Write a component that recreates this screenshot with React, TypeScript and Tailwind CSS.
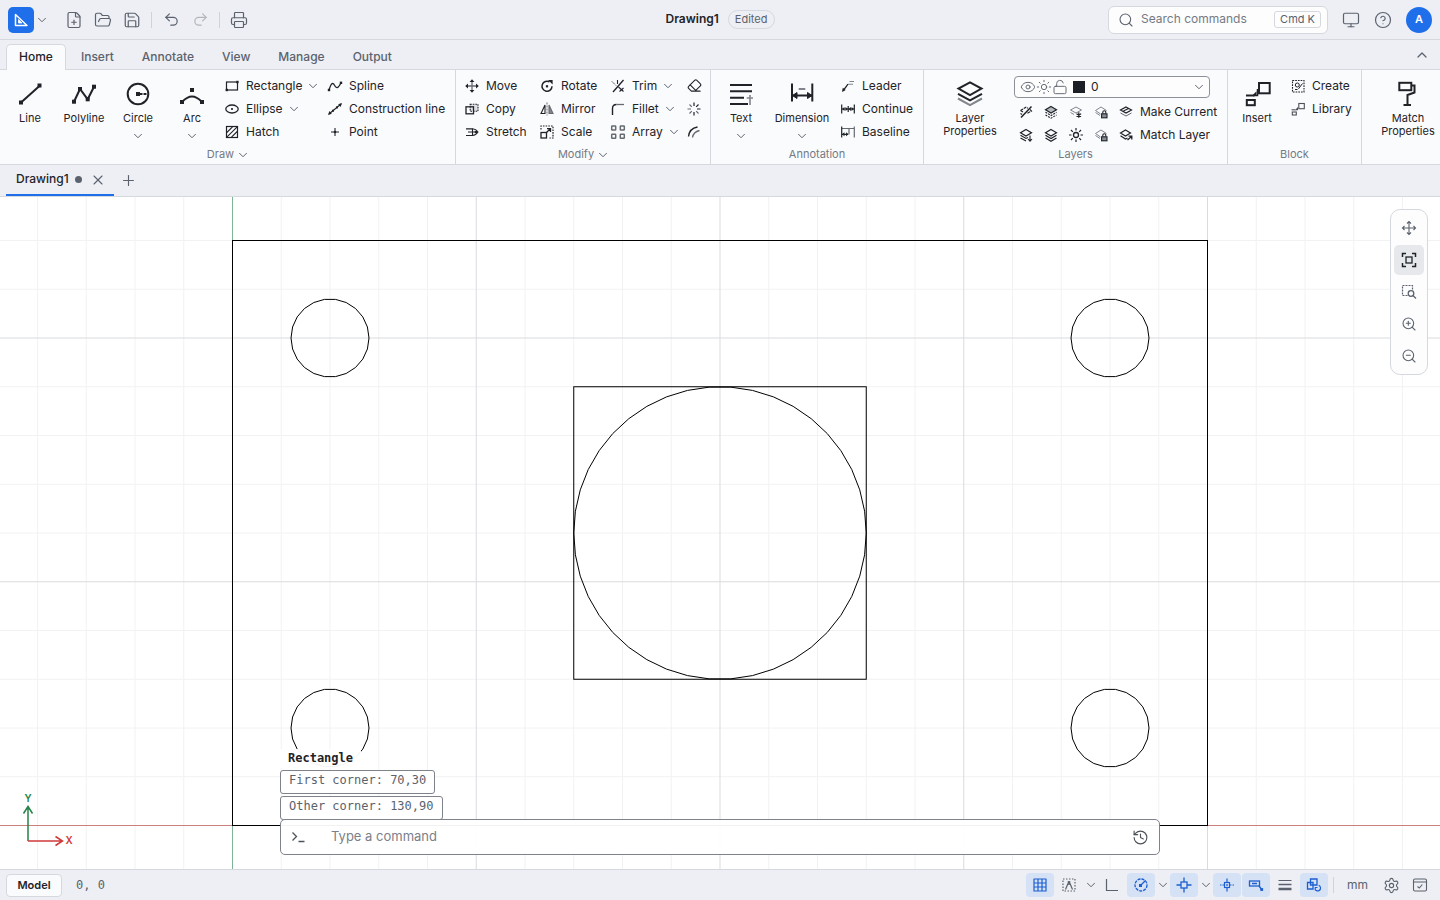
import { useState } from "react";
import type { ReactNode } from "react";
import {
  ChevronDown,
  ChevronUp,
  CircleHelp,
  Eraser,
  Eye,
  FilePlus,
  FolderOpen,
  History,
  LockOpen,
  Monitor,
  Plus,
  Printer,
  Redo2,
  Save,
  Search,
  Settings,
  Sun,
  Undo2,
  X,
  ZoomIn,
  ZoomOut,
} from "lucide-react";

interface GlyphProps {
  box?: number;
  className?: string;
  children: ReactNode;
}

// Line drawing base, 16 units for small tools and 28 for the large ones
const Glyph = ({ box = 16, className = "", children }: GlyphProps) => (
  <svg
    width={box}
    height={box}
    viewBox={`0 0 ${box} ${box}`}
    fill="none"
    stroke="currentColor"
    strokeWidth={box === 28 ? 2 : 1.3}
    className={`shrink-0 ${className}`}
    aria-hidden="true"
  >
    {children}
  </svg>
);

const Dot = ({ x, y, s = 2.4 }: { x: number; y: number; s?: number }) => (
  <rect x={x - s / 2} y={y - s / 2} width={s} height={s} fill="currentColor" stroke="none" />
);

const DIAMOND = "M8 2.5 13.5 5.7 8 9 2.5 5.7Z";
const LOCK = (
  <>
    <rect x="8.6" y="9.8" width="5.4" height="4" fill="#888d95" strokeWidth="1.1" />
    <path d="M9.8 9.5V8.2a1.5 1.5 0 0 1 3 0v1.3" strokeWidth="1.1" />
  </>
);

const icons = {
  line: (
    <Glyph box={28}>
      <path d="M5 22.5 24 5.5" />
      <Dot x={5} y={22.5} s={4} />
      <Dot x={23.5} y={5.5} s={4} />
    </Glyph>
  ),
  polyline: (
    <Glyph box={28}>
      <path d="M4 21.7 10 9l7.7 10.3L24 6.7" />
      <Dot x={4} y={21.7} s={4} />
      <Dot x={10} y={9} s={4} />
      <Dot x={17.7} y={19.3} s={4} />
      <Dot x={24} y={6.7} s={4} />
    </Glyph>
  ),
  circle: (
    <Glyph box={28}>
      <circle cx="14" cy="14" r="10.3" />
      <Dot x={14} y={14} s={4} />
      <path d="M16 14h2.5M19.5 14h3" strokeWidth="1.8" />
    </Glyph>
  ),
  arc: (
    <Glyph box={28}>
      <path d="M4 22C8 18 11 16.6 14 16.6S20 18 24 22" />
      <Dot x={4} y={22} s={4} />
      <Dot x={24} y={22} s={4} />
      <Dot x={14} y={10} s={4} />
    </Glyph>
  ),
  text: (
    <Glyph box={28}>
      <path d="M3 5h22M3 11.3h22M3 17.7h14M3 24h18" />
      <path d="M23 15v10M19.7 18H26" stroke="#81868d" strokeWidth="1.6" />
    </Glyph>
  ),
  dimension: (
    <Glyph box={28}>
      <path d="M4 3.5v18M24.3 3.5v18M4 15.5h20" />
      <path d="m4.5 15.5 4.5-3v6ZM24 15.5l-4.500-3v6Z" fill="currentColor" strokeWidth="1" />
      <path d="M10.7 9h6.600" stroke="#81868d" />
    </Glyph>
  ),
  layerProps: (
    <Glyph box={28}>
      <path d="m2 18.5 12 6.600 12-6.600" stroke="#81868d" />
      <path d="M14 2.3 25.500 8.600 14 15 2.500 8.600ZM2 13.800l12 6.600 12-6.600" />
    </Glyph>
  ),
  insert: (
    <Glyph box={28}>
      <rect x="16" y="3" width="10.7" height="10.3" />
      <rect x="3.8" y="20" width="8" height="5.2" />
      <path d="M3 15.5h8.500" />
      <path d="m9 15.800 4.500-4.500v4.500Z" fill="currentColor" stroke="none" />
      <path d="M10 15.500h4.500V9" strokeWidth="1.500" />
    </Glyph>
  ),
  matchProps: (
    <Glyph box={28}>
      <rect x="5.3" y="2.8" width="12" height="7.4" />
      <path d="M17.5 5.5h3v7L13.5 15v9.5M9.5 25h7.5" />
    </Glyph>
  ),
  rectangle: (
    <Glyph>
      <rect x="2.5" y="4" width="11" height="8" strokeWidth="1.2" />
      <Dot x={2.8} y={12} />
      <Dot x={13.4} y={4} />
    </Glyph>
  ),
  ellipse: (
    <Glyph>
      <ellipse cx="8" cy="8" rx="6.2" ry="4" />
      <Dot x={8} y={8} s={1.8} />
    </Glyph>
  ),
  hatch: (
    <Glyph>
      <rect x="2.5" y="2.5" width="11" height="11" strokeWidth="1.2" />
      <path d="M2.8 8.5 8.5 2.8M2.8 13.2 13.2 2.8M7.5 13.2l5.7-5.7" strokeWidth="1.1" />
    </Glyph>
  ),
  spline: (
    <Glyph>
      <path d="M2 12C4.5 4 6 4.5 7.600 7.500S11 11 14 4.800" />
      <Dot x={2} y={12} />
      <Dot x={14} y={4.8} />
    </Glyph>
  ),
  constructionLine: (
    <Glyph>
      <path d="m2 13 12-10" strokeWidth="1.1" />
      <path d="m1 14 1.4-4 2.4 2.8ZM15 2l-1.4 4-2.4-2.8Z" fill="currentColor" stroke="none" />
      <Dot x={6} y={9.7} s={2} />
      <Dot x={10} y={6.4} s={2} />
    </Glyph>
  ),
  point: (
    <Glyph>
      <path d="M8 4v8M4 8h8" strokeWidth="1.1" />
      <Dot x={8} y={8} s={2.2} />
    </Glyph>
  ),
  move: (
    <Glyph>
      <path d="M8 3v10M3 8h10" stroke="#666b72" />
      <path d="M8 1.2 10.4 4H5.6ZM8 14.8 5.6 12h4.8ZM1.2 8 4 5.6v4.8ZM14.8 8 12 10.4V5.6Z" fill="currentColor" stroke="none" />
    </Glyph>
  ),
  copy: (
    <Glyph>
      <rect x="6.2" y="3.2" width="7.8" height="7" fill="#dfe1e5" strokeDasharray="1.6 1" strokeWidth="1.1" />
      <rect x="2" y="5.8" width="7.5" height="7" />
    </Glyph>
  ),
  stretch: (
    <Glyph>
      <path d="M2 4.8h6.500M2 11.500h6.500M4 8h8" strokeWidth="1.2" />
      <path d="M8.500 4.800C11 5 13 6.500 14 8c-1 1.500-3 3.300-5.500 3.500Z" strokeWidth="1.1" />
      <Dot x={12} y={8} />
    </Glyph>
  ),
  rotate: (
    <Glyph>
      <path d="M10.500 3.900A5 5 0 1 0 13 8.300" strokeWidth="1.5" />
      <path d="M9 2h4.600v4.600Z" fill="currentColor" stroke="none" />
      <Dot x={8} y={8.3} s={2.2} />
    </Glyph>
  ),
  mirror: (
    <Glyph>
      <path d="M6 4v8.5H2Z" strokeWidth="1.1" />
      <path d="M8 1.5v13" stroke="#666b72" strokeDasharray="2 1" strokeWidth="1" />
      <path d="M10 4v8.5h4Z" fill="#81868d" stroke="#666b72" strokeWidth="1.1" />
    </Glyph>
  ),
  scale: (
    <Glyph>
      <rect x="2" y="8.5" width="5.5" height="5.5" />
      <path d="M2 5.5V2h12v12h-3.5" strokeDasharray="1.6 1.1" strokeWidth="1.2" />
      <path d="m7.5 8.5 3.5-3.5M8 4.600h3.500v3.500" />
    </Glyph>
  ),
  trim: (
    <Glyph>
      <path d="M13.5 2 3 14" />
      <path d="M2 3.5 6 7.5" strokeDasharray="1.5 1" strokeWidth="1" />
      <path d="M7.500 2v4M8.500 9l5 4.500M13.500 10l-4 3.500" strokeWidth="1.1" />
    </Glyph>
  ),
  fillet: (
    <Glyph>
      <path d="M2.5 14V7.500c0-2.500 1.500-4 4-4" strokeWidth="1.4" />
      <path d="M6.500 3.500H14" stroke="#666b72" />
    </Glyph>
  ),
  array: (
    <Glyph className="text-[#666b72]">
      <rect x="1.7" y="2" width="4" height="4" rx="0.5" strokeWidth="1.500" />
      <rect x="10.3" y="2" width="4" height="4" rx="0.5" strokeWidth="1.500" />
      <rect x="1.7" y="10.3" width="4" height="4" rx="0.5" strokeWidth="1.500" />
      <rect x="10.3" y="10.3" width="4" height="4" rx="0.5" strokeWidth="1.500" />
    </Glyph>
  ),
  explode: (
    <Glyph>
      <path d="M8 1.5V5M8 11v3.5M11 8h3.5M10.2 5.8l2.3-2.3" strokeWidth="1.2" />
      <path d="M1.5 8H5M3.5 3.5l2.3 2.3M3.5 12.5l2.3-2.3M10.2 10.2l2.3 2.3" stroke="#666b72" strokeWidth="1.2" />
    </Glyph>
  ),
  offset: (
    <Glyph>
      <path d="M2.5 12.5C3 7.5 6 4 11.5 3" />
      <path d="M6.5 13.5c.5-3.5 2.8-6 7-7" stroke="#666b72" />
    </Glyph>
  ),
  leader: (
    <Glyph>
      <path d="M3 12.8 8 6.2" />
      <path d="M8 6.2h5M9.5 3.5H14" stroke="#81868d" strokeWidth="1.1" />
      <path d="m2 14 .8-4.2 2.9 2.2Z" fill="currentColor" stroke="none" />
    </Glyph>
  ),
  continue: (
    <Glyph>
      <path d="M1.7 3.5v9M8.2 5v6M14.3 3.5v9M2 8h12" strokeWidth="1.2" />
      <path d="m2 8 2.5-2v4ZM8 8 5.5 6v4ZM8.4 8l2.5-2v4ZM14 8l-2.5-2v4Z" fill="currentColor" stroke="none" />
    </Glyph>
  ),
  baseline: (
    <Glyph>
      <path d="M14.3 2.5v11M2 4.5h12M9 4.5v6" stroke="#666b72" strokeWidth="1.2" />
      <path d="M1.7 2.5v11M2 10.3h6" strokeWidth="1.2" />
      <path d="m2 10.3 2.5-2v4ZM8.5 10.3l-2.5-2v4Z" fill="currentColor" stroke="none" />
    </Glyph>
  ),
  layerOff: (
    <Glyph>
      <path d="M13.5 2.5 3 13.5" strokeWidth="1.5" />
      <path d="M2.5 6.5 8 3.2l2 1M2.5 6.5 5 8M12 5.500 13.500 7 9 9.500" strokeDasharray="3 0.8" strokeWidth="1.1" />
      <path d="M2.5 9.500 4 10.500" strokeWidth="1.1" />
    </Glyph>
  ),
  layerIsolate: (
    <Glyph>
      <path d={DIAMOND} fill="#b5b9be" strokeWidth="1.2" />
      <path d="M2.5 8.3 8 11.5l5.500-3.200M2.500 11 8 14.200l5.500-3.200" strokeDasharray="2 1" strokeWidth="1.1" />
    </Glyph>
  ),
  layerFreeze: (
    <Glyph>
      <path d="M8 3 13.5 6 8 9 2.500 6ZM2.500 8.500 6 10.500" stroke="#81868d" strokeWidth="1" />
      <path d="M10.800 8.300v5.400M8.500 9.700l4.600 2.700M13.100 9.700l-4.600 2.700" strokeWidth="1.2" />
    </Glyph>
  ),
  layerLock: (
    <Glyph>
      <path d="M7.500 10 2.500 6.500 8 3l5.500 3.500M2.500 8.500 7 11.500" stroke="#81868d" strokeWidth="1" />
      {LOCK}
    </Glyph>
  ),
  layerCurrent: (
    <Glyph>
      <path d="M8 3 13.500 6 8 9 2.500 6ZM5.500 7l5-2.500" strokeWidth="1.2" />
      <path d="M2.500 9 8 12l5.500-3" strokeWidth="1" stroke="#666b72" />
    </Glyph>
  ),
  layerWalk: (
    <Glyph>
      <path d={DIAMOND} strokeWidth="1.2" />
      <path d="M2.500 8.300 8 11.500l2-1M2.500 11 8 14" strokeWidth="1.1" />
      <path d="M12 8.500V14M10 12l2 2.200 2-2.200" strokeWidth="1.1" />
    </Glyph>
  ),
  layerAll: (
    <Glyph>
      <path d={DIAMOND} strokeWidth="1.2" />
      <path d="M2.500 8.300 8 11.500l5.500-3.200M2.500 11 8 14.200l5.500-3.200" strokeWidth="1.2" />
    </Glyph>
  ),
  layerThaw: (
    <Glyph>
      <circle cx="8" cy="8" r="2.5" />
      <path d="M8 1v2.5M8 12.5V15M1 8h2.5M12.5 8H15M3 3l1.8 1.8M11.2 11.2 13 13M3 13l1.8-1.8M11.2 4.8 13 3" strokeWidth="1.2" />
    </Glyph>
  ),
  layerMatch: (
    <Glyph>
      <path d="M7.500 3 12.500 6 7.500 9 2.500 6ZM2.500 8.800 7.500 12l2-1" strokeWidth="1.2" />
      <path d="m9.500 13 4-3.500M10.500 9.200h3.300v3.300" strokeWidth="1.3" />
    </Glyph>
  ),
  blockCreate: (
    <Glyph>
      <rect x="2.5" y="2.5" width="11.5" height="11.5" strokeDasharray="1.7 1" strokeWidth="1.1" />
      <circle cx="7.3" cy="7" r="2" strokeWidth="1" />
      <path d="m8.500 10.800 4-5.300M5 11.500h2.500" strokeWidth="1" />
    </Glyph>
  ),
  blockLibrary: (
    <Glyph className="text-[#4d5259]">
      <rect x="8.8" y="2.5" width="5.5" height="5.2" strokeWidth="1.1" />
      <rect x="2.3" y="11" width="4" height="3" strokeWidth="1.1" />
      <path d="M1.500 8.800h4" strokeWidth="1.1" />
      <path d="M5 9.300 8 5.800v3.500Z" fill="currentColor" stroke="none" />
    </Glyph>
  ),
};

const ICON_BUTTON = "flex items-center justify-center rounded-[5px] text-[#5b626d]";

const Caret = () => <ChevronDown size={14} strokeWidth={1.7} className="-m-0.5 shrink-0 text-[#5b626d]" />;

interface ToolProps {
  icon: ReactNode;
  label: string;
  caret?: boolean;
}

const Tool = ({ icon, label, caret }: ToolProps) => (
  <button className="flex h-[23px] items-center gap-1.5 whitespace-nowrap text-left">
    {icon}
    <span>{label}</span>
    {caret && <Caret />}
  </button>
);

const BigTool = ({ icon, label, caret, className = "w-[54px]" }: ToolProps & { className?: string }) => (
  <button className={`flex shrink-0 flex-col items-center self-start pt-1.5 text-[11px] leading-[13px] ${className}`}>
    {icon}
    <span className="mt-1">{label}</span>
    {caret && (
      <span className="mt-1.5">
        <Caret />
      </span>
    )}
  </button>
);

interface PanelProps {
  title: string;
  caret?: boolean;
  className: string;
  inset: string;
  children: ReactNode;
}

const Panel = ({ title, caret, className, inset, children }: PanelProps) => (
  <section className={`flex shrink-0 flex-col border-r border-[#d5d8de] ${className}`}>
    <div className={`flex flex-1 items-start pt-1 ${inset}`}>{children}</div>
    <h2 className="flex h-[18px] items-center justify-center gap-1 pb-px text-[11px] text-[#747a84]">
      {title}
      {caret && <Caret />}
    </h2>
  </section>
);

const Separator = () => <span className="mx-1 h-4 w-px bg-[#d0d4da]" />;

const TitleBar = () => (
  <header className="grid h-10 shrink-0 grid-cols-[1fr_auto_1fr] items-center border-b border-[#d5d8de] px-2">
    <div className="flex items-center">
      <button aria-label="Application menu" className="flex items-center gap-[3px]">
        <span className="flex size-[26px] items-center justify-center rounded-[5px] bg-[#1f6feb] text-white">
          <Glyph>
            <path d="M2.5 2.5v11H14Z" strokeWidth="1.5" strokeLinejoin="round" />
            <path d="M5.500 7.500V11H9Z" fill="currentColor" strokeWidth="0.8" />
          </Glyph>
        </span>
        <Caret />
      </button>
      <div className="ml-[13px] flex items-center gap-px">
        <button aria-label="New" className={`${ICON_BUTTON} size-7`}><FilePlus size={18} strokeWidth={1.6} /></button>
        <button aria-label="Open" className={`${ICON_BUTTON} size-7`}><FolderOpen size={18} strokeWidth={1.6} /></button>
        <button aria-label="Save" className={`${ICON_BUTTON} size-7`}><Save size={18} strokeWidth={1.6} /></button>
        <Separator />
        <button aria-label="Undo" className={`${ICON_BUTTON} size-7`}><Undo2 size={17} strokeWidth={1.7} /></button>
        <button aria-label="Redo" disabled className={`${ICON_BUTTON} size-7 opacity-40`}><Redo2 size={17} strokeWidth={1.7} /></button>
        <Separator />
        <button aria-label="Print" className={`${ICON_BUTTON} size-7`}><Printer size={18} strokeWidth={1.6} /></button>
      </div>
    </div>
    <div className="flex items-center gap-[9px]">
      <h1 className="pb-px text-xs font-semibold">Drawing1</h1>
      <span className="flex h-[19px] items-center rounded-full border border-[#d5d8de] px-1.5 text-[11px] text-[#5b626d]">Edited</span>
    </div>
    <div className="flex items-center justify-end gap-[9px]">
      <label className="flex h-7 w-[220px] items-center rounded-md border border-[#d5d8de] bg-[#fdfdfe] pl-[9px] pr-1.5">
        <Search size={16} strokeWidth={1.6} className="shrink-0 text-[#5b626d]" />
        <input
          aria-label="Search commands"
          placeholder="Search commands"
          className="ml-[7px] w-full min-w-0 bg-transparent pb-0.5 text-xs outline-none placeholder:text-[#747a84]"
        />
        <kbd className="flex h-[17px] shrink-0 items-center whitespace-nowrap rounded-[3px] border border-[#d5d8de] px-[5px] font-[Inter,sans-serif] text-[11px] text-[#5b626d]">Cmd K</kbd>
      </label>
      <div className="flex gap-1">
        <button aria-label="Display" className={`${ICON_BUTTON} size-7`}><Monitor size={18} strokeWidth={1.6} /></button>
        <button aria-label="Help" className={`${ICON_BUTTON} size-7`}><CircleHelp size={18} strokeWidth={1.6} /></button>
      </div>
      <button aria-label="Account" className="size-[26px] rounded-full bg-[#1f6feb] text-[11px] font-semibold text-white">A</button>
    </div>
  </header>
);

const TABS = ["Home", "Insert", "Annotate", "View", "Manage", "Output"];

const RibbonTabs = () => {
  const [active, setActive] = useState("Home");
  return (
    <nav className="flex h-[30px] shrink-0 items-end gap-0.5 border-b border-[#d5d8de] px-1.5">
      {TABS.map((tab) => (
        <button
          key={tab}
          onClick={() => setActive(tab)}
          className={`-mb-px h-[26px] rounded-t-[5px] border border-b-0 px-3 pb-0.5 text-xs font-medium ${
            tab === active ? "border-[#d5d8de] bg-[#fafbfd] text-[#1f2328]" : "border-transparent text-[#5b626d]"
          }`}
        >
          {tab}
        </button>
      ))}
      <button aria-label="Collapse ribbon" className={`${ICON_BUTTON} ml-auto h-[29px] w-6`}>
        <ChevronUp size={16} strokeWidth={1.9} />
      </button>
    </nav>
  );
};

const LayerSelect = () => (
  <div className="flex h-[22px] w-[196px] items-center rounded border border-[#8b9099] bg-[#fdfdfe] px-[5px] text-[#5b626d]">
    <Eye size={16} strokeWidth={1.4} />
    <Sun size={16} strokeWidth={1.4} />
    <LockOpen size={16} strokeWidth={1.4} />
    <span className="ml-[5px] size-3 bg-[#1c1f26]" />
    <select aria-label="Current layer" className="ml-1.5 flex-1 appearance-none bg-transparent text-xs text-[#1f2328] outline-none">
      <option>0</option>
    </select>
    <Caret />
  </div>
);

const Ribbon = () => (
  <div className="flex h-[95px] shrink-0 overflow-hidden border-b border-[#d5d8de] bg-[#fafbfd]">
    <Panel title="Draw" caret className="w-[456px]" inset="pl-[3px]">
      <BigTool icon={icons.line} label="Line" />
      <BigTool icon={icons.polyline} label="Polyline" />
      <BigTool icon={icons.circle} label="Circle" caret />
      <BigTool icon={icons.arc} label="Arc" caret />
      <div className="ml-[5px] w-[103px]">
        <Tool icon={icons.rectangle} label="Rectangle" caret />
        <Tool icon={icons.ellipse} label="Ellipse" caret />
        <Tool icon={icons.hatch} label="Hatch" />
      </div>
      <div>
        <Tool icon={icons.spline} label="Spline" />
        <Tool icon={icons.constructionLine} label="Construction line" />
        <Tool icon={icons.point} label="Point" />
      </div>
    </Panel>
    <Panel title="Modify" caret className="w-[255px]" inset="pl-2">
      <div className="w-[75px]">
        <Tool icon={icons.move} label="Move" />
        <Tool icon={icons.copy} label="Copy" />
        <Tool icon={icons.stretch} label="Stretch" />
      </div>
      <div className="w-[71px]">
        <Tool icon={icons.rotate} label="Rotate" />
        <Tool icon={icons.mirror} label="Mirror" />
        <Tool icon={icons.scale} label="Scale" />
      </div>
      <div className="w-[76px]">
        <Tool icon={icons.trim} label="Trim" caret />
        <Tool icon={icons.fillet} label="Fillet" caret />
        <Tool icon={icons.array} label="Array" caret />
      </div>
      <div>
        <button aria-label="Erase" className="flex h-[23px] w-4 items-center justify-center"><Eraser size={15} strokeWidth={1.7} /></button>
        <button aria-label="Explode" className="flex h-[23px] items-center">{icons.explode}</button>
        <button aria-label="Offset" className="flex h-[23px] items-center">{icons.offset}</button>
      </div>
    </Panel>
    <Panel title="Annotation" className="w-[213px]" inset="pl-[3px]">
      <BigTool icon={icons.text} label="Text" caret />
      <BigTool icon={icons.dimension} label="Dimension" caret className="w-[68px]" />
      <div className="ml-1">
        <Tool icon={icons.leader} label="Leader" />
        <Tool icon={icons.continue} label="Continue" />
        <Tool icon={icons.baseline} label="Baseline" />
      </div>
    </Panel>
    <Panel title="Layers" className="w-[304px]" inset="pl-3">
      <BigTool icon={icons.layerProps} label="Layer Properties" className="w-[68px]" />
      <div className="ml-[10px] pt-0.5">
        <LayerSelect />
        <div className="mt-0.5 flex gap-[9px] pl-1">
          <button aria-label="Layer off">{icons.layerOff}</button>
          <button aria-label="Isolate layer">{icons.layerIsolate}</button>
          <button aria-label="Freeze layer">{icons.layerFreeze}</button>
          <button aria-label="Lock layer">{icons.layerLock}</button>
          <Tool icon={icons.layerCurrent} label="Make Current" />
        </div>
        <div className="flex gap-[9px] pl-1">
          <button aria-label="Walk layers">{icons.layerWalk}</button>
          <button aria-label="All layers on">{icons.layerAll}</button>
          <button aria-label="Thaw layers">{icons.layerThaw}</button>
          <button aria-label="Unlock layer">{icons.layerLock}</button>
          <Tool icon={icons.layerMatch} label="Match Layer" />
        </div>
      </div>
    </Panel>
    <Panel title="Block" className="w-[134px]" inset="pl-0.5">
      <BigTool icon={icons.insert} label="Insert" />
      <div className="ml-1.5">
        <Tool icon={icons.blockCreate} label="Create" />
        <Tool icon={icons.blockLibrary} label="Library" />
      </div>
    </Panel>
    <Panel title="" className="w-[160px]" inset="pl-3">
      <BigTool icon={icons.matchProps} label="Match Properties" className="w-[68px]" />
    </Panel>
  </div>
);

const DocumentTabs = () => (
  <div className="flex h-8 shrink-0 items-stretch border-b border-[#d5d8de] pl-1.5">
    <div className="flex items-center border-b-2 border-[#1f6feb] pl-[10px] pr-2">
      <button className="pb-0.5 text-xs font-medium">Drawing1</button>
      <span className="ml-1.5 size-[7px] rounded-full bg-[#5b626d]" />
      <button aria-label="Close Drawing1" className={`${ICON_BUTTON} ml-2 size-4`}><X size={16} strokeWidth={1.6} /></button>
    </div>
    <button aria-label="New drawing" className={`${ICON_BUTTON} ml-1 w-[22px]`}><Plus size={17} strokeWidth={1.6} /></button>
  </div>
);

// World to view: millimetres, y up, origin at the plate's lower left corner
const SCALE = 4.875;
const px = (x: number) => 232.5 + x * SCALE;
const py = (y: number) => 628.5 - y * SCALE;

const polygon = (cx: number, cy: number, r: number, n: number) =>
  Array.from({ length: n }, (_, i) => {
    const a = (i * 2 * Math.PI) / n;
    return `${px(cx + r * Math.cos(a)).toFixed(2)},${py(cy + r * Math.sin(a)).toFixed(2)}`;
  }).join(" ");

const gridX = Array.from({ length: 30 }, (_, i) => (i - 4) * 10);
const gridY = Array.from({ length: 14 }, (_, i) => i * 10);

const gridColor = (v: number) => (v % 50 === 0 ? "#d9dbdf" : "#f1f2f4");

const Drawing = () => (
  <svg viewBox="0 0 1440 672" preserveAspectRatio="xMidYMid slice" className="block h-full w-full" role="img" aria-label="Plate drawing">
    <g>
      {[false, true].map((major) => (
        <g key={String(major)}>
          {gridX.filter((x) => (x % 50 === 0) === major).map((x) => (
            <line key={`x${x}`} x1={px(x)} x2={px(x)} y1="0" y2="672" stroke={gridColor(x)} />
          ))}
          {gridY.filter((y) => (y % 50 === 0) === major).map((y) => (
            <line key={`y${y}`} x1="0" x2="1440" y1={py(y)} y2={py(y)} stroke={gridColor(y)} />
          ))}
        </g>
      ))}
      <line x1="0" x2="1440" y1={py(0)} y2={py(0)} stroke="#cc807b" />
      <line x1={px(0)} x2={px(0)} y1="0" y2="672" stroke="#7fb394" />
    </g>
    <g fill="none" stroke="#000">
      <rect x={px(0)} y={py(120)} width={200 * SCALE} height={120 * SCALE} />
      <rect x={px(70)} y={py(90)} width={60 * SCALE} height={60 * SCALE} />
      <polygon points={polygon(100, 60, 30, 42)} />
      {[[20, 20], [180, 20], [20, 100], [180, 100]].map(([x, y]) => (
        <polygon key={`${x}-${y}`} points={polygon(x, y, 8, 22)} />
      ))}
    </g>
  </svg>
);

const AxisMark = () => (
  <svg width="60" height="60" viewBox="0 0 60 60" fill="none" strokeWidth="1.5" className="absolute bottom-5 left-5" aria-hidden="true">
    <path d="M8 52V18M3.5 24.5 8 17.5l4.5 7" stroke="#24834a" />
    <path d="M8 52h34M35.5 47.5l7 4.5-7 4.5" stroke="#cf3b3b" />
    <text x="8" y="13" textAnchor="middle" fill="#24834a" className="font-[Inter,sans-serif] text-[10px] font-semibold">Y</text>
    <text x="49" y="55" textAnchor="middle" fill="#cf3b3b" className="font-[Inter,sans-serif] text-[10px] font-semibold">X</text>
  </svg>
);

const NAV_TOOLS = [
  {
    name: "Pan",
    icon: (
      <Glyph>
        <path d="M8 1.5v13M1.5 8h13M6 3.5l2-2 2 2M6 12.5l2 2 2-2M3.5 6l-2 2 2 2M12.5 6l2 2-2 2" strokeWidth="1.1" />
      </Glyph>
    ),
  },
  {
    name: "Zoom extents",
    icon: (
      <Glyph className="text-[#1f2328]">
        <path d="M1.5 5V1.5H5M11 1.5h3.5V5M14.5 11v3.5H11M5 14.5H1.5V11" strokeWidth="1.5" />
        <rect x="5" y="5" width="6" height="6" />
      </Glyph>
    ),
  },
  {
    name: "Zoom window",
    icon: (
      <Glyph>
        <path d="M6.5 11.5H1.5v-10h10V6" strokeDasharray="2 1" strokeWidth="1.2" />
        <circle cx="10" cy="9.5" r="2.8" />
        <path d="m12 11.5 3 3" />
      </Glyph>
    ),
  },
  { name: "Zoom in", icon: <ZoomIn size={16} strokeWidth={1.6} /> },
  { name: "Zoom out", icon: <ZoomOut size={16} strokeWidth={1.6} /> },
];

const NavBar = () => (
  <div className="absolute right-3 top-3 flex flex-col gap-0.5 rounded-[10px] border border-[#d5d8de] bg-[#fdfdfe] p-[3px]">
    {NAV_TOOLS.map(({ name, icon }) => (
      <button key={name} aria-label={name} className={`${ICON_BUTTON} size-[30px] ${name === "Zoom extents" ? "bg-[#e6e8ec]" : ""}`}>
        {icon}
      </button>
    ))}
  </div>
);

const PROMPTS = ["First corner: 70,30", "Other corner: 130,90"];

const CommandLine = () => (
  <div className="absolute bottom-[14px] left-1/2 flex w-[880px] max-w-full -translate-x-1/2 flex-col items-start">
    <div className="font-['DejaVu_Sans_Mono',monospace] text-xs">
      <p className="mb-0.5 w-fit bg-white/95 px-2 leading-[19px] font-bold">Rectangle</p>
      {PROMPTS.map((prompt) => (
        <p key={prompt} className="mb-0.5 flex h-6 w-fit items-start rounded-[3px] border border-[#7d828b] bg-white/95 px-2 pt-px leading-4 text-[#5b626d]">
          {prompt}
        </p>
      ))}
    </div>
    <div className="-mt-[3px] flex h-9 w-full items-center rounded-[5px] border border-[#7d828b] bg-white/95 px-[10px] text-[#4d5259]">
      <Glyph>
        <path d="m1.5 3.5 4 4-4 4M7.5 12.5h6" />
      </Glyph>
      <input aria-label="Command" placeholder="Type a command" className="ml-6 flex-1 bg-transparent text-[13px] outline-none placeholder:text-[#7b8089]" />
      <button aria-label="Command history"><History size={17} strokeWidth={1.6} /></button>
    </div>
  </div>
);

const TOGGLES = [
  { name: "Grid", on: true, caret: false, icon: <path d="M2 2h12v12H2ZM6 2v12M10 2v12M2 6h12M2 10h12" strokeWidth="1.2" strokeLinejoin="round" /> },
  {
    name: "Snap mode",
    on: false,
    caret: true,
    icon: (
      <>
        <rect x="2" y="2" width="12" height="12" strokeDasharray="1.5 1.5" strokeWidth="1.2" />
        <path d="M4.500 12.500 7 6.500M11.500 12.500 9 6.500M8 4v4" strokeWidth="1.2" />
        <Dot x={8} y={5.5} s={2.6} />
      </>
    ),
  },
  { name: "Ortho", on: false, caret: false, icon: <path d="M2.5 2v11.5H14" strokeWidth="1.2" /> },
  {
    name: "Polar tracking",
    on: true,
    caret: true,
    icon: (
      <>
        <circle cx="8" cy="8" r="6" strokeDasharray="3 1" />
        <path d="m7 9 5.500-5.500" />
        <Dot x={7.5} y={8.5} s={3} />
      </>
    ),
  },
  {
    name: "Object snap",
    on: true,
    caret: true,
    icon: (
      <>
        <rect x="5" y="5" width="6" height="6" />
        <path d="M8 0.5V5M8 11v4.5M0.5 8H5M11 8h4.5" />
      </>
    ),
  },
  {
    name: "Object snap tracking",
    on: true,
    caret: false,
    icon: (
      <>
        <rect x="5.5" y="5.5" width="5" height="5" strokeWidth="1.2" />
        <path d="M8 1.5v4M8 10.5v4M1 8h1.5M3.5 8h2M10.5 8h2M13.5 8H15" strokeWidth="1.2" />
        <Dot x={8} y={8} s={1.6} />
      </>
    ),
  },
  {
    name: "Dynamic input",
    on: true,
    caret: false,
    icon: (
      <>
        <rect x="1.5" y="4" width="10" height="5" />
        <path d="M4 6.5h5M11 9l3.5 4.5" />
        <Dot x={13.7} y={12.5} s={2.8} />
      </>
    ),
  },
  {
    name: "Lineweight",
    on: false,
    caret: false,
    icon: (
      <>
        <path d="M1.500 3.500h13" strokeWidth="1" />
        <path d="M1.500 7.500h13" strokeWidth="1.5" />
        <path d="M1.500 12h13" strokeWidth="2.5" />
      </>
    ),
  },
  {
    name: "Selection cycling",
    on: true,
    caret: false,
    icon: (
      <>
        <path d="M1.500 5.500H7V12H1.500ZM4.500 2H11v6H4.500Z" />
        <path d="M9 10.500h2.500M9.200 10.300v3M9.500 13c2 2 5.500.5 5-2.500-.2-1-.8-1.800-1.800-2.200" strokeWidth="1.2" />
      </>
    ),
  },
];

const StatusBar = () => (
  <footer className="flex h-[31px] shrink-0 items-center border-t border-[#d5d8de] px-1.5">
    <button className="h-[23px] w-14 rounded border border-[#d5d8de] bg-[#fafbfd] text-[11px] font-semibold">Model</button>
    <span className="ml-[14px] font-['DejaVu_Sans_Mono',monospace] text-xs text-[#5b626d]">0, 0</span>
    <div className="ml-auto flex items-center gap-px text-[#5b626d]">
      {TOGGLES.map(({ name, on, caret, icon }) => (
        <div key={name} className="flex items-center gap-px">
          <button
            aria-label={name}
            aria-pressed={on}
            className={`flex h-6 w-7 items-center justify-center rounded ${on ? "bg-[#d5e1f5] text-[#1d5fd0]" : ""}`}
          >
            <Glyph>{icon}</Glyph>
          </button>
          {caret && (
            <button aria-label={`${name} settings`} className="flex w-[13px] justify-center">
              <Caret />
            </button>
          )}
        </div>
      ))}
      <Separator />
      <button className="w-[37px] text-xs">mm</button>
      <button aria-label="Settings" className={`${ICON_BUTTON} h-6 w-7`}><Settings size={17} strokeWidth={1.6} /></button>
      <button aria-label="Clean screen" className={`${ICON_BUTTON} h-6 w-7`}>
        <Glyph>
          <rect x="1.5" y="2" width="13" height="12" rx="1.5" strokeWidth="1.1" />
          <path d="M1.5 5h13M5.5 9.5l1.8 1.5 3-3.5" strokeWidth="1.1" />
        </Glyph>
      </button>
    </div>
  </footer>
);

export default function App() {
  return (
    <div className="flex h-screen flex-col overflow-hidden bg-[#edeff4] font-[Inter,sans-serif] text-xs text-[#1f2328]">
      <TitleBar />
      <RibbonTabs />
      <Ribbon />
      <DocumentTabs />
      <main className="relative min-h-0 flex-1 overflow-hidden bg-white">
        <Drawing />
        <AxisMark />
        <NavBar />
        <CommandLine />
      </main>
      <StatusBar />
    </div>
  );
}
